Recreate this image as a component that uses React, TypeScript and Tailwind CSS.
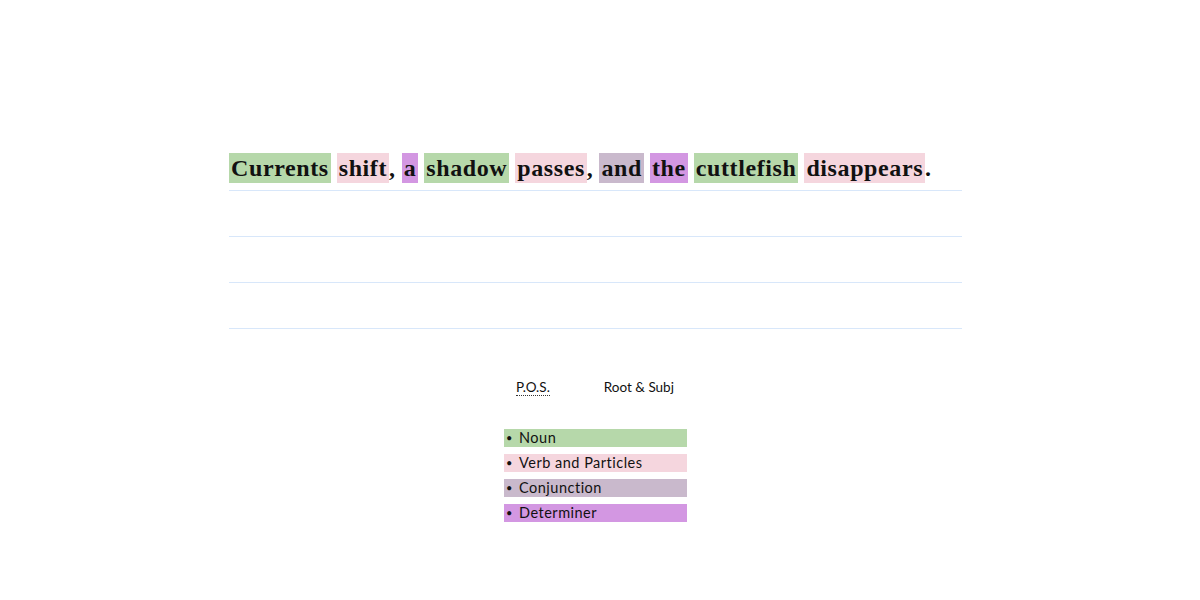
import React from "react";

const words: { t: string; c?: string; after?: string }[] = [
  { t: "Currents", c: "bg-[#b6d8aa]" },
  { t: "shift", c: "bg-[#f5d6de]", after: "," },
  { t: "a", c: "bg-[#d397e2]" },
  { t: "shadow", c: "bg-[#b6d8aa]" },
  { t: "passes", c: "bg-[#f5d6de]", after: "," },
  { t: "and", c: "bg-[#c9b9cc]" },
  { t: "the", c: "bg-[#d397e2]" },
  { t: "cuttlefish", c: "bg-[#b6d8aa]" },
  { t: "disappears", c: "bg-[#f5d6de]", after: "." },
];

const legend = [
  { t: "Noun", c: "bg-[#b6d8aa]" },
  { t: "Verb and Particles", c: "bg-[#f5d6de]" },
  { t: "Conjunction", c: "bg-[#c9b9cc]" },
  { t: "Determiner", c: "bg-[#d397e2]" },
];

export default function App() {
  return (
    <div className="w-[1191px] h-[600px] bg-white flex flex-col items-center">
      <div className="w-[733px] mt-[144px]">
        <div
          className="h-[47px] pt-[2px] border-b border-[#d8e7fa] flex items-center text-[24px] font-bold text-[#111] tracking-[0.6px]"
          style={{ fontFamily: '"Liberation Serif", "DejaVu Serif", serif' }}
        >
          {words.map((w, i) => (
            <React.Fragment key={i}>
              <span className={`${w.c} h-[30px] leading-[30px] px-[2px]`}>{w.t}</span>
              {w.after ? <span className="leading-[30px]">{w.after}</span> : null}
              {i < words.length - 1 ? <span className="w-[6px] inline-block" /> : null}
            </React.Fragment>
          ))}
        </div>
        <div className="h-[46px] border-b border-[#d8e7fa]" />
        <div className="h-[46px] border-b border-[#d8e7fa]" />
        <div className="h-[46px] border-b border-[#d8e7fa]" />
      </div>
      <div
        className="w-[183px] mt-[48px] text-[#111]"
        style={{ fontFamily: '"Lato", "Open Sans", sans-serif' }}
      >
        <div className="flex text-[13.5px] h-[20px] items-center">
          <span className="ml-[12px] border-b border-dotted border-[#333] leading-[16px]">P.O.S.</span>
          <span className="ml-[54px] leading-[16px]">Root &amp; Subj</span>
        </div>
        <div className="mt-[32px] flex flex-col gap-[7px]">
          {legend.map((l, i) => (
            <div key={i} className={`${l.c} h-[18px] flex items-center text-[14.5px] tracking-[0.5px]`}>
              <span className="w-[15px] pl-[2px] text-[11px]">•</span>
              <span>{l.t}</span>
            </div>
          ))}
        </div>
      </div>
    </div>
  );
}
